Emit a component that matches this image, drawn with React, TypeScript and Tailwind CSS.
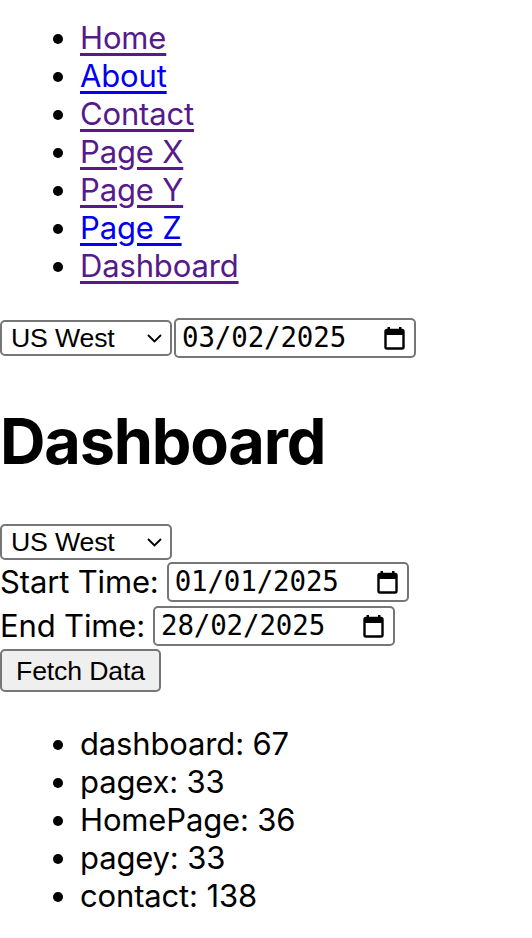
import React from "react";

const ctrlFont = "font-['Liberation_Sans',Arial,sans-serif] text-[26.67px] text-black";

function Chevron() {
  return (
    <svg width="15" height="9" viewBox="0 0 15 9" className="shrink-0">
      <polyline points="1,1 7.5,7.5 14,1" fill="none" stroke="#000" strokeWidth="1.8" />
    </svg>
  );
}

function CalendarIcon() {
  return (
    <svg width="21" height="23" viewBox="0 0 21 23" className="shrink-0">
      <rect x="3.5" y="0" width="2.5" height="4" fill="#000" />
      <rect x="15" y="0" width="2.5" height="4" fill="#000" />
      <rect x="1.5" y="3" width="18" height="18.5" rx="1.5" fill="none" stroke="#000" strokeWidth="2.4" />
      <rect x="1.5" y="3" width="18" height="5" fill="#000" />
    </svg>
  );
}

function FakeSelect() {
  return (
    <div
      className={`flex items-center justify-between w-[172px] h-[36px] border-2 border-[#767676] rounded-[5px] bg-white pl-[9px] pr-[8px] ${ctrlFont}`}
    >
      <span className="leading-none">US West</span>
      <Chevron />
    </div>
  );
}

function FakeDate({ value }: { value: string }) {
  return (
    <div className="flex items-center justify-between w-[242px] h-[40px] border-2 border-[#767676] rounded-[5px] bg-white pl-[6px] pr-[9px]">
      <span className="font-['DejaVu_Sans_Mono',monospace] text-[27.5px] leading-none text-black">{value}</span>
      <CalendarIcon />
    </div>
  );
}

export default function App() {
  const links = [
    { t: "Home", c: "text-[#551a8b] decoration-[#551a8b]" },
    { t: "About", c: "text-[#0000ee] decoration-[#0000ee]" },
    { t: "Contact", c: "text-[#551a8b] decoration-[#551a8b]" },
    { t: "Page X", c: "text-[#551a8b] decoration-[#551a8b]" },
    { t: "Page Y", c: "text-[#551a8b] decoration-[#551a8b]" },
    { t: "Page Z", c: "text-[#0000ee] decoration-[#0000ee]" },
    { t: "Dashboard", c: "text-[#551a8b] decoration-[#551a8b]" },
  ];
  const stats = ["dashboard: 67", "pagex: 33", "HomePage: 36", "pagey: 33", "contact: 138"];

  return (
    <div className="font-['Inter',sans-serif] text-[31px] leading-[38px] tracking-[-0.15px] text-black bg-white min-h-[938px]">
      <ul className="list-disc pl-[80px] mt-[19px] mb-[33px]">
        {links.map((l) => (
          <li key={l.t}>
            <a href="#" className={`underline underline-offset-[4px] decoration-[2.5px] ${l.c}`}>
              {l.t}
            </a>
          </li>
        ))}
      </ul>

      <div className="flex items-center h-[40px] gap-[2px]">
        <FakeSelect />
        <FakeDate value="03/02/2025" />
      </div>

      <h1 className="text-[63px] leading-[77px] font-bold mt-[45px] mb-[44px] tracking-[-1.2px]">Dashboard</h1>

      <FakeSelect />
      <div className="flex items-center h-[44px] gap-[8px]">
        <span>Start Time:</span>
        <FakeDate value="01/01/2025" />
      </div>
      <div className="flex items-center h-[44px] gap-[8px]">
        <span>End Time:</span>
        <FakeDate value="28/02/2025" />
      </div>
      <button
        className={`block w-[161px] h-[43px] mt-[1px] border-2 border-[#767676] rounded-[5px] bg-[#efefef] ${ctrlFont}`}
      >
        Fetch Data
      </button>

      <ul className="list-disc pl-[80px] mt-[33px]">
        {stats.map((s) => (
          <li key={s}>{s}</li>
        ))}
      </ul>
    </div>
  );
}
